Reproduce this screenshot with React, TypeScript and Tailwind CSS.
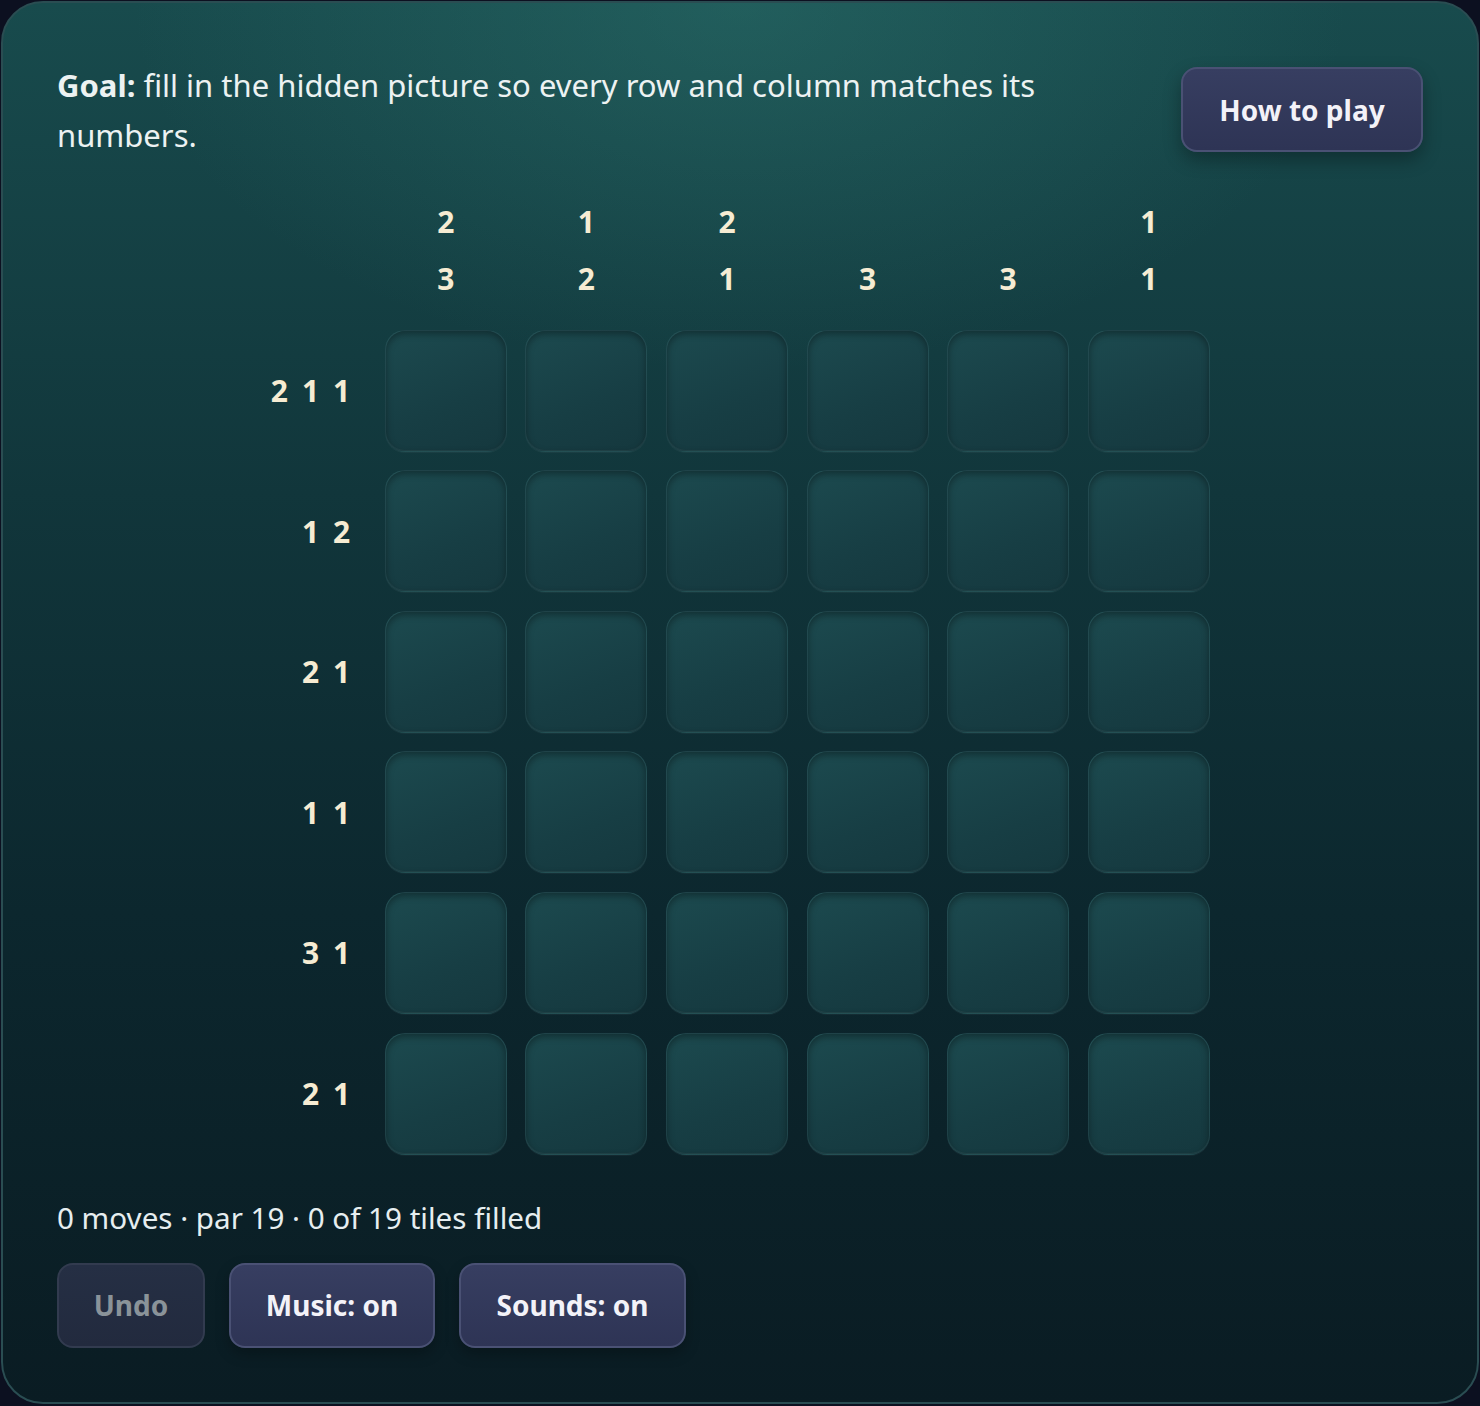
import React from "react";

const colClues: number[][] = [
  [2, 3],
  [1, 2],
  [2, 1],
  [3],
  [3],
  [1, 1],
];

const rowClues: number[][] = [
  [2, 1, 1],
  [1, 2],
  [2, 1],
  [1, 1],
  [3, 1],
  [2, 1],
];

const font = { fontFamily: '"Noto Sans", "Open Sans", sans-serif' };

function Tile() {
  return (
    <button
      type="button"
      aria-label="tile"
      className="h-[122px] w-[122px] rounded-[20px] border border-[#ffffff0a] bg-[linear-gradient(160deg,#1c4a4f_0%,#173e44_60%,#15383e_100%)] shadow-[inset_0_3px_7px_rgba(0,0,0,0.35),inset_0_-1px_0_rgba(255,255,255,0.05),0_1px_0_rgba(255,255,255,0.04)]"
    />
  );
}

function ActionButton({
  label,
  width,
  disabled,
}: {
  label: string;
  width: string;
  disabled?: boolean;
}) {
  return (
    <button
      type="button"
      disabled={disabled}
      className={
        disabled
          ? `${width} h-[85px] rounded-[16px] border-2 border-[#323b4f] bg-[linear-gradient(180deg,#252f44_0%,#222a3e_100%)] text-[28px] font-bold text-[#8a9399]`
          : `${width} h-[85px] rounded-[16px] border-2 border-[#4a5174] bg-[linear-gradient(180deg,#373e61_0%,#2e3455_100%)] text-[28px] font-bold text-[#f3f2f8] shadow-[0_6px_14px_rgba(0,0,0,0.25)]`
      }
    >
      {label}
    </button>
  );
}

export default function App() {
  return (
    <div className="min-h-screen bg-[#0c1020] p-px" style={font}>
      <div className="rounded-[42px] border-2 border-[#2a4d52] bg-[radial-gradient(ellipse_55%_35%_at_50%_0%,rgba(52,130,122,0.35),transparent_75%),linear-gradient(180deg,#184b4d_0%,#11363b_35%,#0c272e_65%,#0a1c23_100%)] px-[54px] pb-[54px] pt-[57px]">
        <div className="flex items-start justify-between gap-6">
          <p className="flex-1 text-[31px] leading-[50px] text-[#ecf2f2]">
            <strong className="font-bold">Goal:</strong> fill in the hidden picture so every row and column matches its numbers.
          </p>
          <button
            type="button"
            className="mt-[7px] h-[85px] w-[242px] shrink-0 rounded-[16px] border-2 border-[#4a5174] bg-[linear-gradient(180deg,#373e61_0%,#2e3455_100%)] text-[28px] font-bold text-[#f3f2f8] shadow-[0_8px_18px_rgba(0,0,0,0.3)]"
          >
            How to play
          </button>
        </div>

        <div className="mt-[33px] flex justify-center">
          <div className="grid grid-cols-[96px_repeat(6,122px)] gap-x-[18.6px] gap-y-[18.6px]">
            <div />
            {colClues.map((clue, c) => (
              <div key={`c${c}`} className="flex h-[118px] flex-col items-center justify-end pb-[4px]">
                {clue.map((n, i) => (
                  <span key={i} className="text-[30px] font-bold leading-[57px] text-[#f6ecd3]">
                    {n}
                  </span>
                ))}
              </div>
            ))}
            {rowClues.map((clue, r) => (
              <React.Fragment key={`r${r}`}>
                <div className="flex items-center justify-end gap-[14px] pr-[16px] text-[30px] font-bold text-[#f6ecd3]">
                  {clue.map((n, i) => (
                    <span key={i}>{n}</span>
                  ))}
                </div>
                {Array.from({ length: 6 }).map((_, c) => (
                  <Tile key={c} />
                ))}
              </React.Fragment>
            ))}
          </div>
        </div>

        <p className="mt-[38px] text-[29.6px] leading-[50px] text-[#e6eef0]">
          0 moves · par 19 · 0 of 19 tiles filled
        </p>

        <div className="mt-[20px] flex gap-6">
          <ActionButton label="Undo" width="w-[148px]" disabled />
          <ActionButton label="Music: on" width="w-[206px]" />
          <ActionButton label="Sounds: on" width="w-[227px]" />
        </div>
      </div>
    </div>
  );
}
